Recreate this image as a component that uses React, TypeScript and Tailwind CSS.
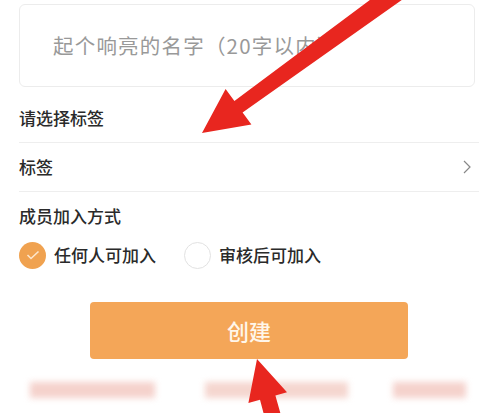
import React from "react";

const font = { fontFamily: '"Noto Sans CJK SC", "Noto Sans", sans-serif' };

export default function App() {
  return (
    <div className="relative w-[479px] h-[413px] overflow-hidden bg-white" style={font}>
      <div className="pl-[19px] pr-[4px] pt-[4px]">
        <div className="h-[83px] rounded-[6px] border border-[#ececec] flex items-center pl-[33px]">
          <span className="text-[20.5px] text-[#999] tracking-[1.2px]">起个响亮的名字（20字以内）</span>
        </div>
      </div>
      <div className="pl-[19px]">
        <div className="h-[55px] flex items-center pt-[6px]">
          <span className="text-[17px] font-medium text-[#2a2a2a]">请选择标签</span>
        </div>
        <div className="border-t border-[#eeeeee] h-[49px] flex items-center justify-between pr-[8px]">
          <span className="text-[17px] font-medium text-[#2a2a2a]">标签</span>
          <svg width="8" height="14" viewBox="0 0 8 14" fill="none">
            <path d="M1 1l6 6-6 6" stroke="#888" strokeWidth="1.2" />
          </svg>
        </div>
        <div className="border-t border-[#eeeeee] pt-[11px]">
          <div className="text-[17px] font-medium text-[#2a2a2a] leading-[26px]">成员加入方式</div>
          <div className="flex items-center mt-[12px] h-[28px]">
            <div className="w-[27px] h-[27px] rounded-full bg-[#f0a250] flex items-center justify-center">
              <svg width="14" height="10" viewBox="0 0 14 10" fill="none">
                <path d="M1.5 5l3.5 3.5L12.5 1.5" stroke="#fde6cc" strokeWidth="1.6" />
              </svg>
            </div>
            <span className="ml-[8px] text-[17px] font-medium text-[#2a2a2a]">任何人可加入</span>
            <div className="ml-[28px] w-[27px] h-[27px] rounded-full border border-[#e2e2e2]" />
            <span className="ml-[8px] text-[17px] font-medium text-[#2a2a2a]">审核后可加入</span>
          </div>
        </div>
      </div>
      <div className="flex mt-[33px] pl-[90px]">
        <div className="w-[318px] h-[57px] rounded-[4px] bg-[#f4a658] flex items-center justify-center">
          <span className="text-[22px] font-medium text-[#fff6ea]">创建</span>
        </div>
      </div>
      <div className="flex mt-[23px] blur-[3px]">
        <div className="ml-[30px] w-[125px] h-[16px] bg-[#f5d2cc]" />
        <div className="ml-[50px] w-[143px] h-[16px] bg-[#f5d6cf]" />
        <div className="ml-[45px] w-[73px] h-[16px] bg-[#f5d2cc]" />
      </div>
      <svg className="absolute left-0 top-0" width="479" height="413" viewBox="0 0 479 413">
        <g fill="#e8261f">
          <polygon points="202,133 225.6,88.9 234.4,101 394,-18 406,-3 242.6,112.4 251.4,124.5" />
          <polygon points="257,359 287,392.2 275.4,395.5 284,426 268,430 260,399.7 248.4,403" />
        </g>
      </svg>
    </div>
  );
}
